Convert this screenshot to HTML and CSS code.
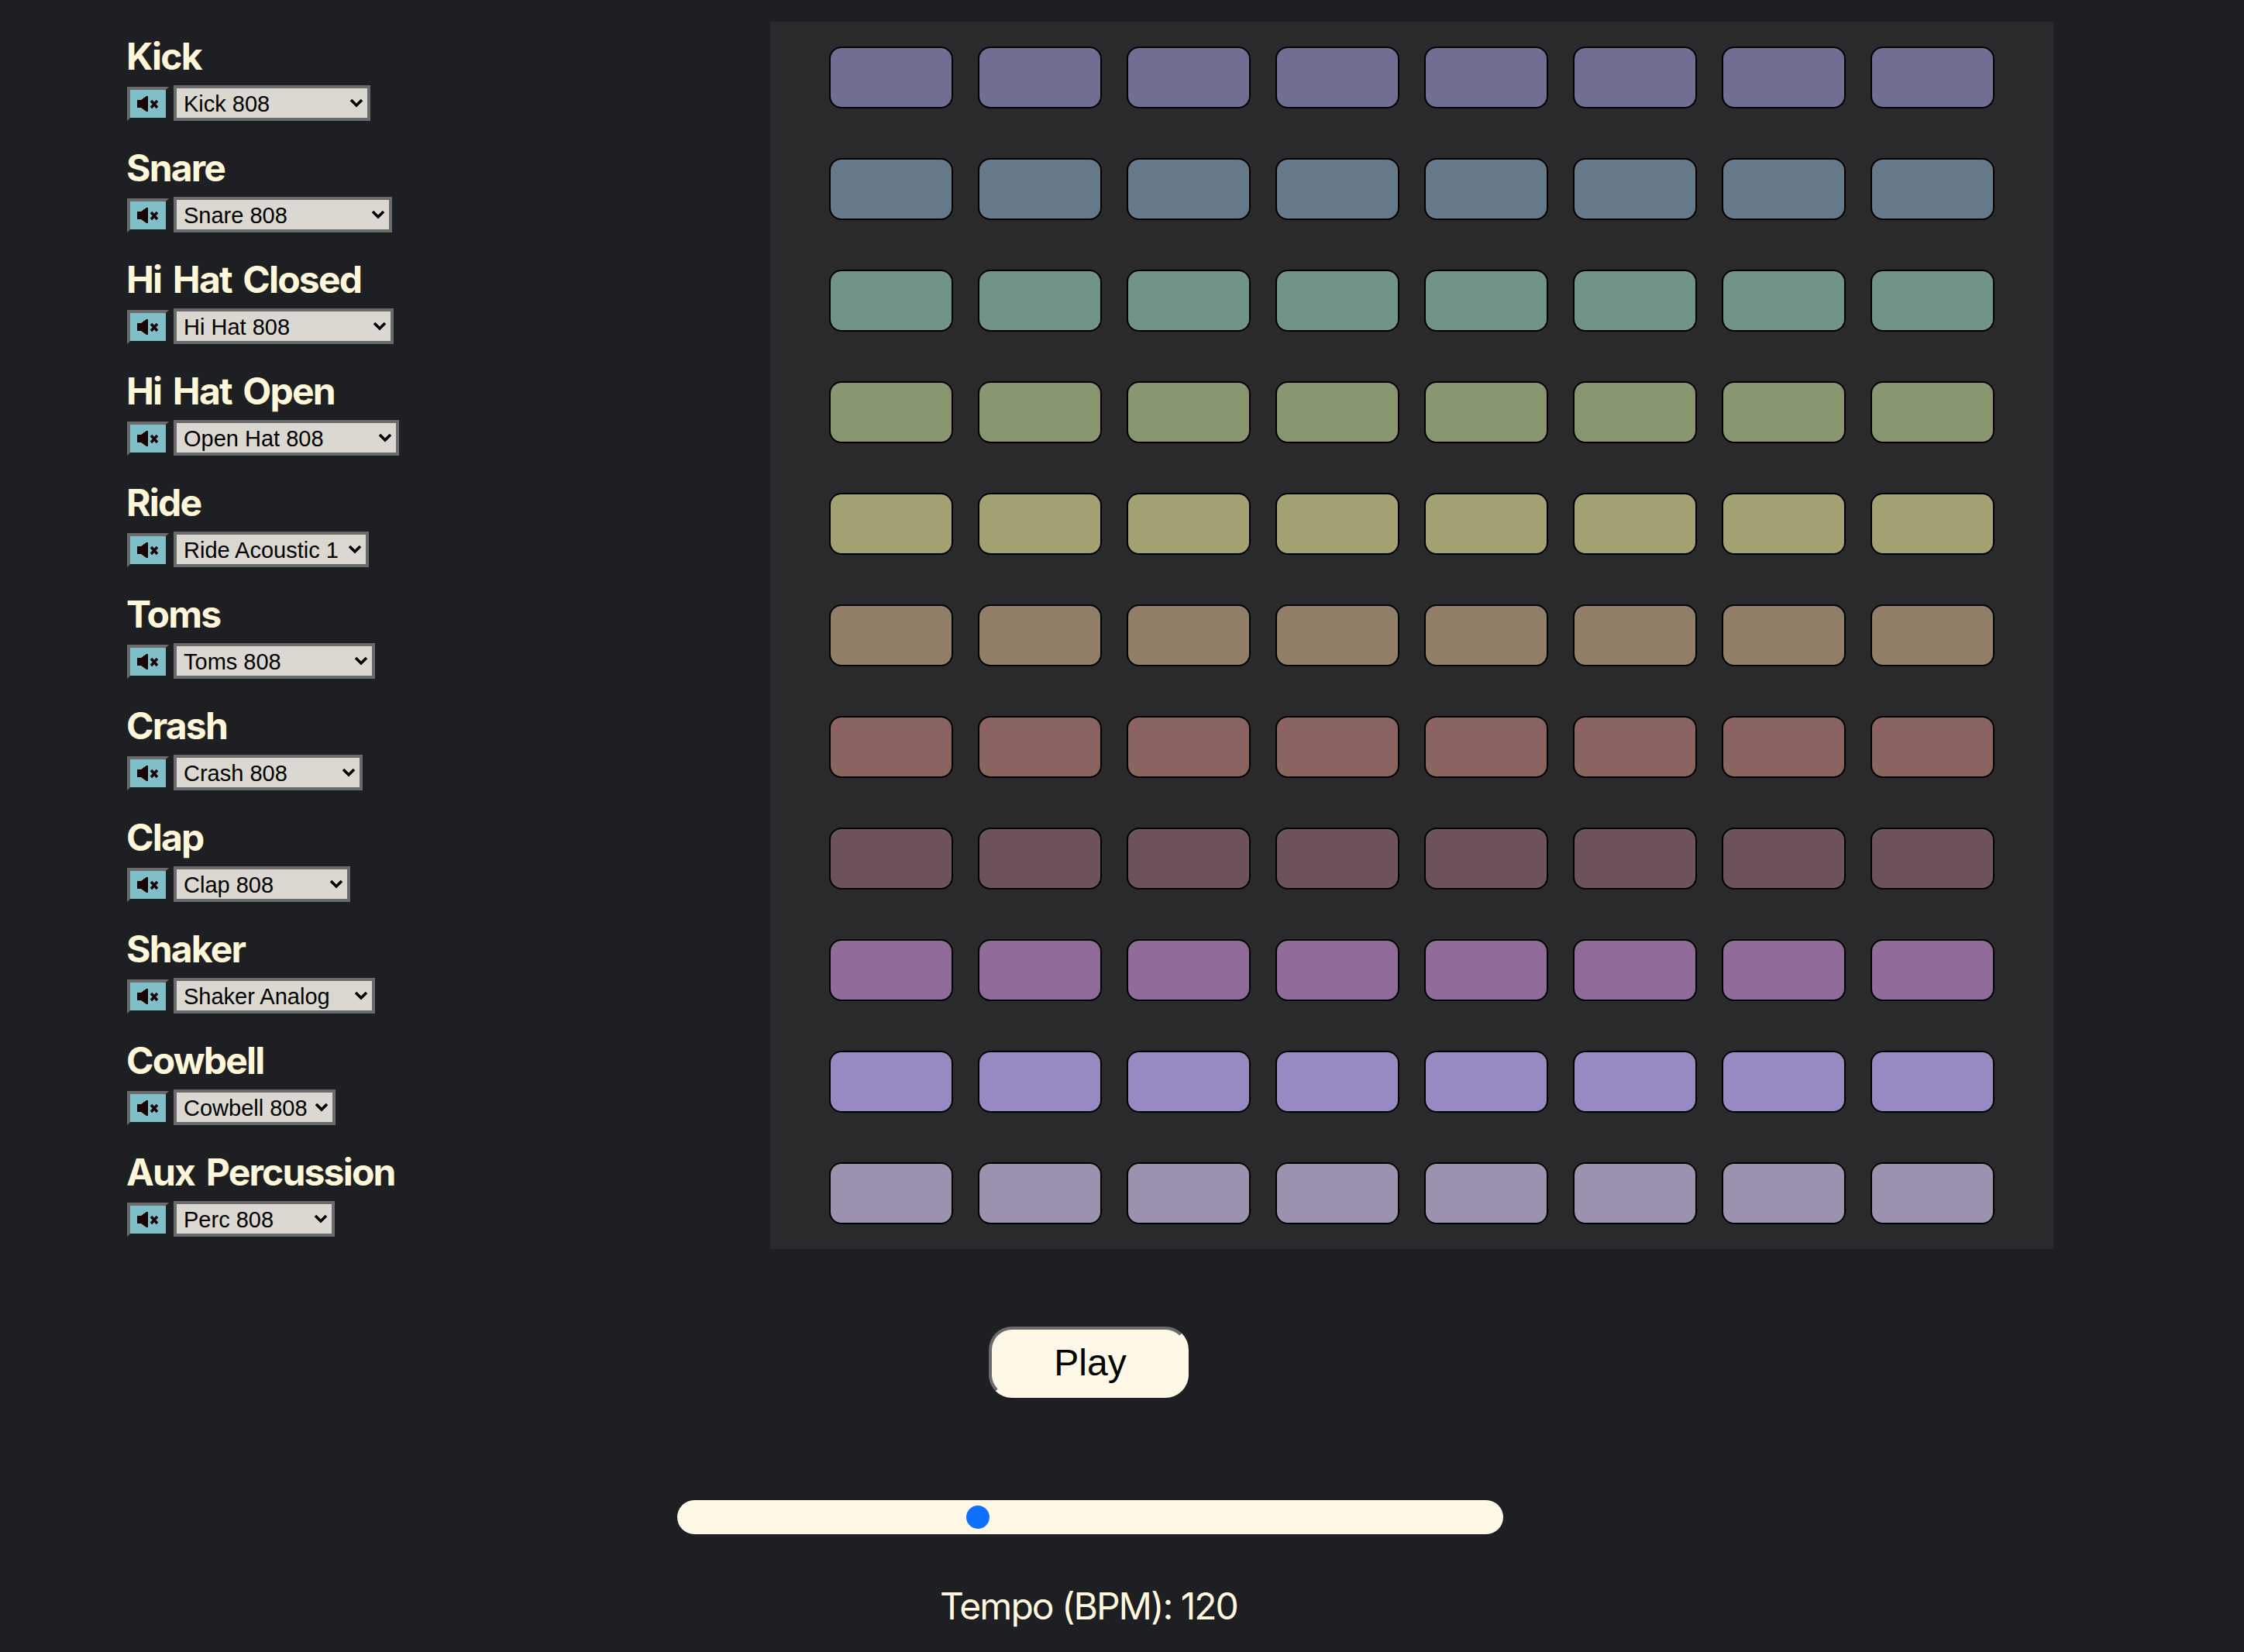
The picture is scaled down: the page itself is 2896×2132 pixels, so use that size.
FILE: index.html
```html
<!DOCTYPE html>
<html lang="en">
<head>
<meta charset="utf-8">
<title>Drum Sequencer</title>
<link rel="stylesheet" href="styles.css">
</head>
<body>
<svg class="defs" width="0" height="0"><symbol id="mute" viewBox="0 0 46 36"><path d="M9 13h5l7-5h2v20h-2l-7-5H9z"/><path d="M27 14l8 9M35 14l-8 9" class="x"/></symbol></svg>
<main class="app">
  <section class="tracks">
    <div class="track"><h2 class="name">Kick</h2><div class="ctl"><button class="mute"><svg class="ic"><use href="#mute"/></svg></button><select class="sound" style="width:254px"><option>Kick 808</option></select></div></div>
    <div class="track"><h2 class="name">Snare</h2><div class="ctl"><button class="mute"><svg class="ic"><use href="#mute"/></svg></button><select class="sound" style="width:282px"><option>Snare 808</option></select></div></div>
    <div class="track"><h2 class="name">Hi Hat Closed</h2><div class="ctl"><button class="mute"><svg class="ic"><use href="#mute"/></svg></button><select class="sound" style="width:284px"><option>Hi Hat 808</option></select></div></div>
    <div class="track"><h2 class="name">Hi Hat Open</h2><div class="ctl"><button class="mute"><svg class="ic"><use href="#mute"/></svg></button><select class="sound" style="width:291px"><option>Open Hat 808</option></select></div></div>
    <div class="track"><h2 class="name">Ride</h2><div class="ctl"><button class="mute"><svg class="ic"><use href="#mute"/></svg></button><select class="sound" style="width:252px"><option>Ride Acoustic 1</option></select></div></div>
    <div class="track"><h2 class="name">Toms</h2><div class="ctl"><button class="mute"><svg class="ic"><use href="#mute"/></svg></button><select class="sound" style="width:260px"><option>Toms 808</option></select></div></div>
    <div class="track"><h2 class="name">Crash</h2><div class="ctl"><button class="mute"><svg class="ic"><use href="#mute"/></svg></button><select class="sound" style="width:244px"><option>Crash 808</option></select></div></div>
    <div class="track"><h2 class="name">Clap</h2><div class="ctl"><button class="mute"><svg class="ic"><use href="#mute"/></svg></button><select class="sound" style="width:228px"><option>Clap 808</option></select></div></div>
    <div class="track"><h2 class="name">Shaker</h2><div class="ctl"><button class="mute"><svg class="ic"><use href="#mute"/></svg></button><select class="sound" style="width:260px"><option>Shaker Analog</option></select></div></div>
    <div class="track"><h2 class="name">Cowbell</h2><div class="ctl"><button class="mute"><svg class="ic"><use href="#mute"/></svg></button><select class="sound" style="width:209px"><option>Cowbell 808</option></select></div></div>
    <div class="track"><h2 class="name">Aux Percussion</h2><div class="ctl"><button class="mute"><svg class="ic"><use href="#mute"/></svg></button><select class="sound" style="width:208px"><option>Perc 808</option></select></div></div>
  </section>
  <section class="grid" id="grid">
    <div class="pad r1"></div><div class="pad r1"></div><div class="pad r1"></div><div class="pad r1"></div><div class="pad r1"></div><div class="pad r1"></div><div class="pad r1"></div><div class="pad r1"></div>
    <div class="pad r2"></div><div class="pad r2"></div><div class="pad r2"></div><div class="pad r2"></div><div class="pad r2"></div><div class="pad r2"></div><div class="pad r2"></div><div class="pad r2"></div>
    <div class="pad r3"></div><div class="pad r3"></div><div class="pad r3"></div><div class="pad r3"></div><div class="pad r3"></div><div class="pad r3"></div><div class="pad r3"></div><div class="pad r3"></div>
    <div class="pad r4"></div><div class="pad r4"></div><div class="pad r4"></div><div class="pad r4"></div><div class="pad r4"></div><div class="pad r4"></div><div class="pad r4"></div><div class="pad r4"></div>
    <div class="pad r5"></div><div class="pad r5"></div><div class="pad r5"></div><div class="pad r5"></div><div class="pad r5"></div><div class="pad r5"></div><div class="pad r5"></div><div class="pad r5"></div>
    <div class="pad r6"></div><div class="pad r6"></div><div class="pad r6"></div><div class="pad r6"></div><div class="pad r6"></div><div class="pad r6"></div><div class="pad r6"></div><div class="pad r6"></div>
    <div class="pad r7"></div><div class="pad r7"></div><div class="pad r7"></div><div class="pad r7"></div><div class="pad r7"></div><div class="pad r7"></div><div class="pad r7"></div><div class="pad r7"></div>
    <div class="pad r8"></div><div class="pad r8"></div><div class="pad r8"></div><div class="pad r8"></div><div class="pad r8"></div><div class="pad r8"></div><div class="pad r8"></div><div class="pad r8"></div>
    <div class="pad r9"></div><div class="pad r9"></div><div class="pad r9"></div><div class="pad r9"></div><div class="pad r9"></div><div class="pad r9"></div><div class="pad r9"></div><div class="pad r9"></div>
    <div class="pad r10"></div><div class="pad r10"></div><div class="pad r10"></div><div class="pad r10"></div><div class="pad r10"></div><div class="pad r10"></div><div class="pad r10"></div><div class="pad r10"></div>
    <div class="pad r11"></div><div class="pad r11"></div><div class="pad r11"></div><div class="pad r11"></div><div class="pad r11"></div><div class="pad r11"></div><div class="pad r11"></div><div class="pad r11"></div>
  </section>
</main>
<section class="transport">
  <button class="play">Play</button>
  <input class="tempo" type="range" min="30" max="280" value="120">
  <p class="bpm">Tempo (BPM): 120</p>
</section>
</body>
</html>
```
FILE: styles.css
```css
* { box-sizing: border-box; }
html, body { margin: 0; padding: 0; }
body {
  width: 2896px;
  height: 2132px;
  overflow: hidden;
  background: #1e1f23;
  color: #fff7de;
  font-family: Inter, "Liberation Sans", sans-serif;
}
.defs { position: absolute; }
.app {
  display: flex;
  padding: 28px 0 0 164px;
}
.tracks {
  width: 830px;
  display: flex;
  flex-direction: column;
}
.track {
  height: 144px;
  display: flex;
  flex-direction: column;
  padding-top: 18px;
}
.name {
  margin: 0 0 0 -1px;
  height: 54px;
  line-height: 54px;
  font-size: 48px;
  font-weight: 700;
  letter-spacing: -1.8px;
  word-spacing: 5px;
  color: #fff7da;
  white-space: nowrap;
}
.ctl {
  display: flex;
  align-items: flex-end;
  gap: 6px;
  margin-top: 10px;
}
.mute {
  width: 54px;
  height: 44px;
  padding: 0;
  border-style: solid;
  border-width: 4px;
  border-color: #6b6b6b #1e1f23 #1e1f23 #6b6b6b;
  background: #80bfc7;
  display: flex;
}
.ic {
  width: 46px;
  height: 36px;
  fill: #1a0505;
}
#mute .x {
  fill: none;
  stroke: #1a0505;
  stroke-width: 3.4;
}
.sound {
  appearance: none;
  -webkit-appearance: none;
  height: 46px;
  padding: 1px 4px 0 9px;
  border: 4px solid #6b6b6b;
  border-radius: 0;
  background-color: #dad8d0;
  background-image: url("data:image/svg+xml,%3Csvg xmlns='http://www.w3.org/2000/svg' width='18' height='12' viewBox='0 0 18 12'%3E%3Cpath d='M2 2l7 7 7-7' fill='none' stroke='%23000' stroke-width='3.6'/%3E%3C/svg%3E");
  background-repeat: no-repeat;
  background-position: right 5px center;
  color: #000;
  font-family: "Liberation Sans", Arial, sans-serif;
  font-size: 29px;
}
.grid {
  width: 1656px;
  height: 1584px;
  padding: 32px 76px;
  background: #2a2a2c;
  display: grid;
  grid-template-columns: repeat(8, 160px);
  grid-auto-rows: 80px;
  column-gap: 32px;
  row-gap: 64px;
}
.pad {
  border: 2px solid #000;
  border-radius: 16px;
}
.r1 { background: #6e6f93; }
.r2 { background: #667a89; }
.r3 { background: #729488; }
.r4 { background: #88966f; }
.r5 { background: #a3a071; }
.r6 { background: #917f69; }
.r7 { background: #8b6361; }
.r8 { background: #6b525b; }
.r9 { background: #906b97; }
.r10 { background: #9889c3; }
.r11 { background: #9c92ae; }
.transport {
  width: 2810px;
  display: flex;
  flex-direction: column;
  align-items: center;
  padding-top: 100px;
}
.play {
  width: 258px;
  height: 92px;
  padding: 0 0 0 4px;
  border-style: solid;
  border-width: 4px;
  border-color: #6b6b6b #fff8e7 #fff8e7 #6b6b6b;
  border-radius: 30px;
  background: #fff8e7;
  color: #000;
  font-family: "Liberation Sans", Arial, sans-serif;
  font-size: 48px;
}
.tempo {
  appearance: none;
  -webkit-appearance: none;
  display: block;
  width: 1066px;
  height: 44px;
  margin: 132px 0 0 4px;
  border-radius: 22px;
  background: #fff8e7;
}
.tempo::-webkit-slider-runnable-track {
  height: 44px;
  background: transparent;
}
.tempo::-webkit-slider-thumb {
  -webkit-appearance: none;
  width: 30px;
  height: 30px;
  margin-top: 7px;
  border-radius: 50%;
  background: #0f6fff;
}
.bpm {
  margin: 64px 0 0;
  font-size: 48px;
  line-height: 58px;
  letter-spacing: -2px;
  color: #fff7de;
}
```
